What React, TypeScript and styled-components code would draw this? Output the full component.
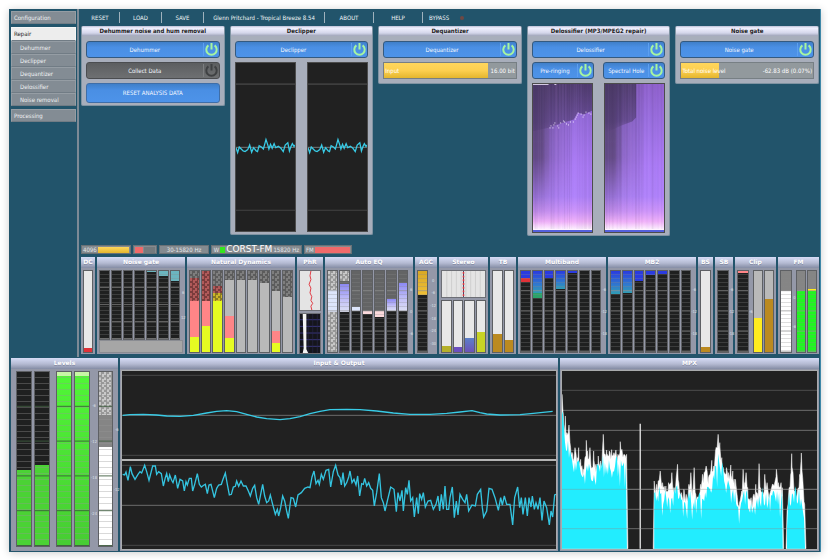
import React from 'react';
import styled, { createGlobalStyle, css } from 'styled-components';

const GlobalStyle = createGlobalStyle`
  *, *::before, *::after { box-sizing: border-box; }
  body { margin: 0; background: #fff; }
  body, button {
    font-family: "DejaVu Sans Condensed", "Noto Sans", sans-serif;
    font-size: 6px;
    line-height: 10px;
  }
  button { margin: 0; padding: 0; border: 0; cursor: pointer; }
  svg { display: block; }
`;

/* ---------- shell ---------- */

const Page = styled.div`
  display: flex;
  min-height: 100vh;
  padding: 9px 7px 8px 9px;
`;

const Window = styled.div`
  flex: 1;
  min-width: 0;
  display: grid;
  grid-template-columns: minmax(0, 1fr);
  grid-template-rows: 1fr auto;
  background: #22546b;
  border-right: 1px solid #3f88a8;
  box-shadow: 0 1px 8px rgba(0, 0, 0, 0.2);
`;

const Upper = styled.div`
  display: flex;
  padding-bottom: 1px;
`;

const Sidebar = styled.nav`
  display: flex;
  flex-direction: column;
  flex: 0 0 70px;
  padding: 2px 1px 0 2px;
  border-right: 2px solid #7d8a96;
`;

const NavGroup = styled.div`
  display: flex;
  flex-direction: column;
  margin-bottom: 3px;
`;

const NavItem = styled.button<{ $active?: boolean; $sub?: boolean }>`
  height: ${(p) => (p.$active ? 14 : 13)}px;
  padding-left: ${(p) => (p.$sub ? 8 : 2)}px;
  text-align: left;
  color: ${(p) => (p.$active ? '#222' : '#eef0f2')};
  background: ${(p) => (p.$active ? '#ededed' : '#838c94')};
  border: 1px solid ${(p) => (p.$active ? '#f6f6f6' : '#959da4')};
  border-bottom-color: #717c85;
`;

const Main = styled.main`
  flex: 1;
  min-width: 0;
  display: flex;
  flex-direction: column;
  padding: 0 1px 3px 2px;
`;

const Menu = styled.div`
  display: flex;
  align-items: center;
  height: 17px;
`;

const MenuItem = styled.button<{ $w: number }>`
  flex: 0 0 ${(p) => p.$w}px;
  height: 11px;
  color: #f0f4f6;
  background: none;
  border-right: 1px solid #9fb2bd;
  white-space: nowrap;
`;

const Bypass = styled.button`
  display: flex;
  align-items: center;
  gap: 11px;
  padding-left: 6px;
  color: #f0f4f6;
  background: none;
`;

const Lamp = styled.span`
  width: 4px;
  height: 4px;
  border-radius: 50%;
  background: #704844;
`;

/* ---------- repair panels ---------- */

const Panels = styled.div`
  display: grid;
  grid-template-columns: repeat(5, minmax(0, 1fr));
  align-items: start;
  gap: 5px;
`;

const Panel = styled.section`
  background: #a8aebb;
  border: solid #7f93a2;
  border-width: 0 1px 1px;
  border-radius: 2px;
  overflow: hidden;
`;

const PanelTitle = styled.h2`
  margin: 0;
  height: 10px;
  font-size: 6px;
  line-height: 9px;
  text-align: center;
  white-space: nowrap;
  color: #1d1d22;
  background: linear-gradient(#b9bdd4, #f1f1ff 20%, #d4d6ea 70%, #9fa4b8);
`;

const PanelBody = styled.div<{ $end?: number }>`
  display: grid;
  gap: 4px;
  padding: 5px 4px ${(p) => p.$end ?? 2}px;
`;

const Pair = styled.div<{ $gap: number }>`
  display: grid;
  grid-template-columns: 1fr 1fr;
  gap: ${(p) => p.$gap}px;
`;

const blue = css`
  background: linear-gradient(#3f7fc9, #4a8fe4 35%, #4d93e9);
`;

const Action = styled.button`
  ${blue}
  height: 20px;
  color: #f2f7ff;
  border: 1px solid #3f6ea8;
  border-radius: 3px;
`;

const ToggleButton = styled.button<{ $off?: boolean }>`
  display: flex;
  align-items: center;
  height: 17px;
  padding-right: 1px;
  color: #f2f7ff;
  border: 1px solid ${(p) => (p.$off ? '#4b4d50' : '#345a80')};
  border-radius: 3px;
  ${(p) => (p.$off ? css`background: linear-gradient(#5c5e60, #6e7072);` : blue)}
`;

const ToggleLabel = styled.span`
  flex: 1;
  text-align: center;
  white-space: nowrap;
`;

const PowerSlot = styled.span<{ $off?: boolean }>`
  display: flex;
  padding-left: 1px;
  border-left: 1px solid ${(p) => (p.$off ? '#7c7e80' : '#5c9ff0')};
  color: ${(p) => (p.$off ? '#3f4143' : '#a6f5a0')};
`;

const Power = () => (
  <svg width="13" height="13" viewBox="0 0 13 13" fill="none" stroke="currentColor" strokeWidth="2" aria-hidden="true">
    <path d="M3.4 2.4A5.2 5.2 0 1 0 9.6 2.4" />
    <path d="M6.5 0V6.5" />
  </svg>
);

const Toggle = ({ label, off }: { label: string; off?: boolean }) => (
  <ToggleButton $off={off} aria-pressed={!off}>
    <ToggleLabel>{label}</ToggleLabel>
    <PowerSlot $off={off}><Power /></PowerSlot>
  </ToggleButton>
);

const Gauge = styled.div<{ $value: number }>`
  display: flex;
  justify-content: space-between;
  height: 17px;
  padding: 0 1px;
  line-height: 15px;
  color: #fff;
  border: 1px solid #777f84;
  white-space: nowrap;
  background: linear-gradient(#ffd65c, #fccf50 50%, #e4b62e) 0 0 / ${(p) => p.$value}% 100% no-repeat #92999d;
`;

const Screen = styled.svg<{ $h: number }>`
  width: 100%;
  height: ${(p) => p.$h}px;
  background: #212121;
  border: 1px solid #4c4c4c;
`;

const WAVE =
  '30,80 35,95 40,78 46,84 52,90 58,92 66,86 72,72 78,94 84,80 92,90 96,92 101,74 108,78 114,84 118,70 122,55 127,70 131,84 136,70 141,82 147,68 152,80 160,76 168,82 175,92 181,72 189,65 194,90 199,76 203,68 208,76 212,72';

const ClipScope = () => (
  <Screen $h={170} viewBox="30 -177 182 510" preserveAspectRatio="none">
    <path d="M30-113H212" stroke="#555" strokeWidth="3" />
    <path d="M30 79H212" stroke="#777" strokeWidth="3" />
    <path d="M30 270H212" stroke="#444" strokeWidth="3" />
    <polyline points={WAVE} fill="none" stroke="#38cbe6" strokeWidth="4" />
  </Screen>
);

/* Small repeatable generator so that the drawn noise is the same on each load. */
const seeded = (seed: number) => {
  let s = seed;
  return () => {
    s = (s * 16807) % 2147483647;
    return s / 2147483647;
  };
};

const TRACE: [number, number][] = [
  [17, 44], [18, 42], [20, 44], [21, 41], [22, 39], [25, 42], [26, 44], [28, 39], [31, 37], [32, 38], [34, 40],
  [36, 41], [38, 38], [41, 38], [43, 35], [44, 33], [45, 31], [46, 29], [49, 30], [51, 33], [52, 31], [54, 28], [57, 29], [59, 30],
];

const Spectrogram = ({ id, trace, seed }: { id: string; trace?: boolean; seed: number }) => {
  const rnd = seeded(seed);
  const streaks = Array.from({ length: 61 }, (_, i) => ({ x: i, o: rnd() * 0.1, light: rnd() > 0.5 }));
  return (
    <Screen $h={150} viewBox="0 0 61 150" preserveAspectRatio="none">
      <defs>
        <linearGradient id={`${id}v`} x2="0" y2="1">
          <stop offset="0" stopColor="#8f62cc" />
          <stop offset=".25" stopColor="#9a6fe0" />
          <stop offset=".55" stopColor="#ac7cf6" />
          <stop offset=".76" stopColor="#b184fb" />
          <stop offset=".86" stopColor="#cf96fa" />
          <stop offset=".93" stopColor="#f2b4fa" />
          <stop offset=".98" stopColor="#fff2ff" />
        </linearGradient>
        <linearGradient id={`${id}h`} x2="1" y2="0">
          <stop offset="0" stopColor="#453856" stopOpacity=".75" />
          <stop offset=".17" stopColor="#453856" stopOpacity=".75" />
          <stop offset=".2" stopColor="#453856" stopOpacity=".55" />
          <stop offset=".27" stopColor="#453856" stopOpacity=".5" />
          <stop offset=".29" stopColor="#453856" stopOpacity=".3" />
          <stop offset=".65" stopColor="#453856" stopOpacity=".08" />
          <stop offset=".66" stopColor="#453856" stopOpacity="0" />
        </linearGradient>
        <linearGradient id={`${id}f`} x2="0" y2="1">
          <stop offset="0" stopColor="#fff" />
          <stop offset=".5" stopColor="#e4e4e4" />
          <stop offset=".78" stopColor="#444" />
          <stop offset=".95" stopColor="#000" />
        </linearGradient>
        <linearGradient id={`${id}t`} x2="0" y2="1">
          <stop offset="0" stopColor="#4b3a66" stopOpacity=".9" />
          <stop offset={trace ? '.8' : '.75'} stopColor="#4f3c70" stopOpacity=".62" />
          <stop offset="1" stopColor="#4f3c70" stopOpacity={trace ? '.35' : '0'} />
        </linearGradient>
        <mask id={`${id}m`}><rect width="61" height="150" fill={`url(#${id}f)`} /></mask>
      </defs>
      <rect width="61" height="150" fill={`url(#${id}v)`} />
      <rect width="61" height="150" fill={`url(#${id}h)`} mask={`url(#${id}m)`} />
      {trace
        ? <path d="M0 0H61V27L52 31L46 29L42 36L28 40L17 44L0 48Z" fill={`url(#${id}t)`} />
        : <path d="M0 0H32V34L28 38L17 42L0 50Z" fill={`url(#${id}t)`} />}
      {streaks.map((k) => (
        <rect key={k.x} x={k.x} width="1" height="147" fill={k.light ? '#c79cff' : '#3c2c5a'} opacity={k.o} />
      ))}
      {trace && TRACE.map(([x, y]) => <rect key={x} x={x} y={y} width="1" height="1" fill="#f2e8ff" />)}
      {trace && <path d="M0 .5H16M22 .5H24" stroke="#d9cfe6" />}
      <path d="M0 149H61" stroke="#1d2fd0" strokeWidth="1.6" />
    </Screen>
  );
};

/* ---------- status strip ---------- */

const Status = styled.div`
  display: flex;
  gap: 2px;
  margin-top: auto;
  margin-bottom: 3px;
`;

const Chip = styled.div<{ $w: number }>`
  display: flex;
  align-items: center;
  justify-content: center;
  gap: 1px;
  flex: 0 0 ${(p) => p.$w}px;
  height: 9px;
  padding: 0 1px;
  line-height: 7px;
  color: #e3e7ea;
  background: #858b90;
  border: 1px solid #6a7176;
  white-space: nowrap;
`;

const ChipFill = styled.span<{ $c: string; $w?: number }>`
  flex: ${(p) => (p.$w ? `0 0 ${p.$w}px` : 1)};
  height: 6px;
  background: ${(p) => p.$c};
`;

const Rds = styled.span`
  font-family: "DejaVu Sans", sans-serif;
  font-size: 9px;
  color: #fff;
`;

/* ---------- meters ---------- */

const Rack = styled.div`
  display: grid;
  grid-template-columns: 14fr 88fr 108fr 26fr 88fr 22fr 49fr 26fr 88fr 88fr 15fr 18fr 41fr 41fr;
  gap: 2px;
`;

const Unit = styled.section`
  min-width: 0;
  display: flex;
  flex-direction: column;
  background: #9498a8;
`;

const UnitTitle = styled.h3`
  margin: 0;
  height: 11px;
  font-family: "DejaVu Sans", sans-serif;
  font-size: 6px;
  line-height: 10px;
  text-align: center;
  white-space: nowrap;
  overflow: hidden;
  color: #fff;
  text-shadow: 0 1px 0 #878da6;
  background: linear-gradient(#d6dcf6, #b4bad2 55%, #848ca4);
`;

const Bars = styled.div<{ $h?: number; $gap?: number; $end?: number }>`
  display: flex;
  gap: ${(p) => p.$gap ?? 1}px;
  height: ${(p) => p.$h ?? 83}px;
  margin: 2px ${(p) => p.$end ?? 2}px 0 2px;
`;

type Look = 'fine' | 'coarse' | 'plain';

const lines: Record<Look, ReturnType<typeof css>> = {
  fine: css`
    background:
      linear-gradient(transparent 95%, rgba(150, 150, 150, 0.55) 0) 0 0 / 100% 25%,
      linear-gradient(transparent 3px, rgba(135, 135, 135, 0.28) 0) 0 0 / 100% 4px;
  `,
  coarse: css`
    background:
      linear-gradient(transparent 97%, rgba(60, 90, 60, 0.9) 0) 0 0 / 100% 20%,
      linear-gradient(transparent 5px, rgba(150, 150, 150, 0.36) 0) 0 0 / 100% 6px;
  `,
  plain: css`background: none;`,
};

const Track = styled.div<{ $look: Look; $flex: number }>`
  position: relative;
  flex: ${(p) => p.$flex} 1 0;
  min-width: 0;
  display: flex;
  flex-direction: column;
  border: 1px solid #5e6064;
  background: #1f2020;
  &::after {
    content: "";
    position: absolute;
    inset: 0;
    ${(p) => lines[p.$look]}
  }
`;

const Fill = styled.div<{ $h: number; $paint: string }>`
  flex: ${(p) => p.$h} 1 0;
  background: ${(p) => p.$paint};
`;

const Gap = styled.div<{ $flex: number }>`
  flex: ${(p) => p.$flex} 1 0;
`;

const Scale = styled.div<{ $flex?: number }>`
  flex: ${(p) => p.$flex ?? 4} 1 0;
  min-width: 0;
  display: flex;
  flex-direction: column;
  justify-content: space-evenly;
  align-items: center;
  font-size: 4px;
  line-height: 5px;
  color: #dfe2ea;
`;

const checks = (a: string, b: string) => `repeating-conic-gradient(${a} 0 25%, ${b} 0 50%) 0 0 / 5px 5px`;

const PAINT: Record<string, string> = {
  check: checks('#5c5c5c', '#7e7e7e'),
  redCheck: checks('#7a3c3c', '#b25a5a'),
  goldCheck: checks('#8a7a20', '#cdb52a'),
  paleCheck: checks('#989898', '#c8c8c8'),
  pink: '#ff8587',
  yellow: '#e6fb22',
  silver: '#b9b9b9',
  steel: '#636465',
  mid: '#858585',
  light: '#e8e8e8',
  white: '#fff',
  dark: '#1f2020',
  red: '#e03238',
  blue: '#2a3be0',
  sky: 'linear-gradient(#2a3be0, #2f78cf 60%, #2f9db4)',
  leaf: '#2aa36a',
  teal: '#6bb5bf',
  lilac: 'linear-gradient(#8c88f4, #c5c3f7 60%, #dcdff4)',
  ice: '#dde5fb',
  blush: '#fbd9dc',
  gold: 'linear-gradient(#d9a824, #efbf36)',
  brown: '#bb8a20',
  olive: '#b5b02a',
  violet: '#6b4fc0',
  denim: 'linear-gradient(#5c80c8, #6c52b8)',
  lime: '#c8d325',
  sun: '#ffec1f',
  green: '#22f522',
  grass: 'linear-gradient(#50f636, #47cc33)',
  moss: '#4bd235',
  mint: '#c8f5a6',
};

/* A meter is read from top to bottom: each pair is a paint and its share of the height. */
type Stack = [string, number][];

const Meter = ({ stack, look = 'fine', flex = 10 }: { stack: Stack; look?: Look; flex?: number }) => (
  <Track $look={look} $flex={flex}>
    {stack.map(([paint, h], i) => <Fill key={i} $paint={PAINT[paint]} $h={h} />)}
  </Track>
);

const Meters = ({ stacks, look }: { stacks: Stack[]; look?: Look }) => (
  <>{stacks.map((s, i) => <Meter key={i} stack={s} look={look} />)}</>
);

const Marks = ({ values, flex }: { values: string[]; flex?: number }) => (
  <Scale $flex={flex}>{values.map((v) => <span key={v}>{v}</span>)}</Scale>
);

const DB = ['-6', '-12', '-18'];

const NOISE: Stack[] = [
  [['dark', 1]], [['dark', 1]], [['dark', 1]], [['dark', 1]],
  [['teal', 3], ['dark', 202]], [['teal', 13], ['dark', 192]], [['teal', 30], ['dark', 175]],
];

const DYNAMICS: Stack[] = [
  [['check', 20], ['redCheck', 68], ['pink', 108], ['yellow', 47]],
  [['redCheck', 88], ['pink', 75], ['yellow', 80]],
  [['check', 45], ['redCheck', 21], ['goldCheck', 22], ['yellow', 155]],
  [['check', 25], ['silver', 108], ['pink', 68], ['yellow', 42]],
  [['check', 25], ['silver', 218]],
  [['check', 25], ['silver', 218]],
  [['check', 36], ['silver', 207]],
  [['check', 58], ['silver', 120], ['pink', 37], ['yellow', 28]],
  [['check', 78], ['silver', 165]],
];

const EQ: Stack[] = [
  [['paleCheck', 55], ['ice', 67], ['paleCheck', 121]],
  [['paleCheck', 28], ['steel', 11], ['lilac', 82], ['dark', 122]],
  [['steel', 108], ['ice', 12], ['dark', 123]],
  [['steel', 120], ['blush', 7], ['dark', 116]],
  [['steel', 120], ['blush', 18], ['dark', 105]],
  [['steel', 84], ['lilac', 36], ['dark', 123]],
  [['steel', 36], ['lilac', 84], ['dark', 123]],
];

const MULTI: Stack[] = [
  [['blue', 20], ['red', 13], ['dark', 210]],
  [['sky', 64], ['leaf', 15], ['dark', 164]],
  [['blue', 20], ['dark', 223]],
  [['sky', 54], ['dark', 189]],
  [['blue', 4], ['dark', 239]],
  [['dark', 1]],
  [['dark', 1]],
];

const MULTI2: Stack[] = [
  [['sky', 68], ['dark', 175]],
  [['sky', 66], ['dark', 177]],
  [['blue', 28], ['dark', 215]],
  [['blue', 12], ['dark', 231]],
  [['blue', 9], ['dark', 234]],
  [['dark', 1]],
  [['dark', 1]],
];

const STEREO: Stack[] = [
  [['light', 136], ['olive', 19]],
  [['light', 138], ['violet', 17]],
  [['light', 111], ['denim', 44]],
  [['light', 93], ['lime', 62]],
];

const Blank = styled.div`
  flex: 1;
  margin: 0 2px 1px;
  background: #a6a6a6;
  border: 1px solid #8a8c92;
`;

const PhaseScope = styled.svg<{ $h: number; $dark?: boolean }>`
  width: calc(100% - 4px);
  height: ${(p) => p.$h}px;
  margin: 2px 2px 0;
  background: ${(p) => (p.$dark ? '#15151c' : '#e4e4e4')};
  border: 1px solid #6d6f76;
`;

/* ---------- lower row ---------- */

const Lower = styled.div`
  display: grid;
  grid-template-columns: 107fr 438fr 259fr;
  gap: 2px;
  padding: 0 1px 1px 2px;
`;

const Plot = styled.svg`
  flex: 1;
  width: calc(100% - 2px);
  height: 180px;
  margin: 1px 1px 1px;
  background: #212121;
  border: 1px solid #a9abad;
`;

const INPUT =
  '368,193 390,191 430,190 470,192 500,195 540,196 580,193 620,186 650,181 680,179 710,182 740,190 770,198 800,203 840,206 870,203 900,197 930,188 960,181 990,176 1040,175 1080,176 1130,180 1180,186 1230,190 1290,190 1340,187 1380,183 1416,179 1440,185 1460,189 1500,192 1560,191 1600,187 1658,181';

const OUTPUT =
  '368,370 374,372 378,363 384,388 391,347 396,368 405,385 414,370 420,362 425,366 434,343 440,362 447,388 458,345 466,345 470,370 476,362 484,368 490,405 496,380 500,368 505,392 509,372 515,388 519,395 526,372 533,412 540,385 548,390 553,420 558,392 562,402 568,382 574,382 578,420 584,400 592,368 598,400 604,408 612,402 616,400 622,428 627,402 633,400 643,440 650,412 656,402 664,400 668,388 676,366 682,400 688,432 694,430 700,408 706,406 710,390 716,406 723,390 730,405 738,405 745,420 751,435 758,412 764,403 770,440 776,460 782,430 788,400 794,435 800,455 806,450 811,432 818,460 826,490 832,475 836,495 ' +
  '842,470 848,435 854,450 860,480 865,502 873,440 880,442 887,468 894,432 904,425 914,412 924,408 930,410 936,378 942,360 948,398 954,388 958,400 964,370 970,385 978,358 986,355 992,408 1000,362 1007,343 1014,372 1020,380 1024,402 1029,365 1034,405 1040,395 1046,378 1050,360 1056,395 1062,385 1068,402 1073,375 1079,435 1085,398 1090,400 1094,382 1100,405 1106,395 1112,412 1118,418 1123,465 1130,425 1138,368 1144,440 1150,455 1155,480 1162,450 1172,408 1182,415 1189,482 1194,425 1200,450 1206,418 1210,480 1217,410 1222,430 1227,388 1232,450 1238,440 1243,498 1250,440 1255,488 1259,428 1265,445 1270,425 1276,468 1284,450 1292,448 1300,475 1308,460 1314,435 1319,480 1324,430 1330,475 1335,405 1340,475 1346,475 1350,440 1357,408 1363,500 1369,450 1374,492 1380,430 1388,445 1395,455 1400,430 1406,480 1416,462 1426,465 1432,430 1442,415 1447,470 1451,498 1460,480 1467,412 1476,415 1485,440 1495,478 1502,440 1507,462 1513,435 1520,460 1530,460 1538,522 1544,440 1553,408 1559,470 1564,440 1569,490 1576,440 1582,495 1587,440 1593,468 1597,435 1603,475 1608,455 1614,475 1620,440 1626,508 1632,450 1640,470 1648,522 1653,480 1658,498 1664,432 1668,430';

const IoPlot = () => (
  <Plot viewBox="366 60 1302 533" preserveAspectRatio="none">
    <path d="M366 73H1668M366 313H1668M366 343H1668M366 583H1668" stroke="#484848" strokeWidth="3" />
    <path d="M366 193H1668M366 463H1668" stroke="#6c6c6c" strokeWidth="3" />
    <path d="M366 327H1668" stroke="#b4b4b4" strokeWidth="6" />
    <polyline points={INPUT} fill="none" stroke="#38cbe6" strokeWidth="4" />
    <polyline points={OUTPUT} fill="none" stroke="#34c4e0" strokeWidth="4" />
  </Plot>
);

const BANDS: [number, number][][] = [
  [[36,130],[40,190],[43,240],[46,195],[50,245],[57,222],[62,290],[68,310],[75,290],[82,320],[86,290],[92,325],[100,355],[105,320],[109,268],[113,300],[120,290],[124,350],[131,300],[136,340],[145,315],[152,330],[157,310],[160,250],[163,310],[170,297],[178,300],[185,296],[192,305],[198,297],[204,310],[211,272],[216,295],[222,310],[230,310]],
  [[313,390],[320,400],[331,360],[338,395],[348,405],[356,395],[366,365],[372,410],[379,380],[383,340],[387,395],[395,425],[402,415],[409,430],[417,400],[423,365],[428,420],[433,350],[438,430],[445,440],[452,400],[458,370],[469,345],[476,380],[486,328],[492,345],[497,300],[505,250],[510,275],[516,320],[524,365],[530,350],[536,365],[543,342],[549,360],[557,385],[563,440],[569,455],[576,420],[580,355],[585,395],[589,365],[594,410],[604,440],[612,430],[618,400],[624,430],[628,338],[632,410],[639,425],[645,370],[652,395],[660,430],[668,400],[680,355],[686,395],[694,395],[698,410]],
  [[712,480],[718,410],[723,370],[726,308],[730,365],[737,420],[743,420],[750,370],[755,306],[759,380],[765,460]],
];

const at = (pts: [number, number][], x: number) => {
  for (let i = 1; i < pts.length; i++) {
    const [x0, y0] = pts[i - 1];
    const [x1, y1] = pts[i];
    if (x <= x1) return y0 + ((y1 - y0) * (x - x0)) / (x1 - x0);
  }
  return pts[pts.length - 1][1];
};

/* Peak hold in white with the live spectrum over it; the valleys of both are jagged. */
const spectrum = () => {
  const rnd = seeded(77);
  let peak = '';
  let body = '';
  for (const pts of BANDS) {
    const a = pts[0][0];
    const b = pts[pts.length - 1][0];
    peak += `M${a - 3} 593`;
    body += `M${a} 593`;
    for (let x = a; x <= b; x += 1) {
      const anchor = pts.some((p) => p[0] === x);
      if (anchor || (x - a) % 3 === 0) {
        peak += `L${x} ${Math.round(at(pts, x) + (anchor ? 0 : rnd() * 34))}`;
      }
      if ((x - a) % 3 === 0) {
        const near = (at(pts, Math.max(a, x - 9)) + at(pts, x) + at(pts, Math.min(b, x + 9))) / 3;
        const deep = rnd() > 0.86 ? 34 : 0;
        body += `L${x} ${Math.round(near + 14 + rnd() * 66 + deep)}`;
      }
    }
    peak += `L${b + 4} 593Z`;
    body += `L${b + 1} 593Z`;
  }
  return { peak, body };
};

const { peak, body } = spectrum();

const MpxPlot = () => (
  <Plot viewBox="36 60 766 533" preserveAspectRatio="none">
    <path d="M36 118H802M36 298H802M36 355H802M36 475H802M36 533H802" stroke="#4c4c4c" strokeWidth="3" />
    <path d="M36 178H802M36 238H802M36 415H802" stroke="#6e6e6e" strokeWidth="3" />
    <path d={peak} fill="#fff" stroke="#fff" strokeWidth="1.5" />
    <path d="M271 218V593" stroke="#e6e6e6" strokeWidth="4" />
    <path d={body} fill="#22edff" />
    <path d="M36 415H802M36 475H802M36 533H802" stroke="#8b8b8b" strokeOpacity=".4" strokeWidth="3" />
  </Plot>
);

/* ---------- app ---------- */

const MENU: [string, number][] = [
  ['RESET', 39], ['LOAD', 42], ['SAVE', 42], ['Glenn Pritchard - Tropical Breeze 8.54', 121], ['ABOUT', 49], ['HELP', 49],
];

export default function App() {
  return (
    <Page>
      <GlobalStyle />
      <Window>
        <Upper>
          <Sidebar>
            <NavGroup><NavItem>Configuration</NavItem></NavGroup>
            <NavGroup>
              <NavItem $active>Repair</NavItem>
              {['Dehummer', 'Declipper', 'Dequantizer', 'Delossifier', 'Noise removal'].map((n) => (
                <NavItem key={n} $sub>{n}</NavItem>
              ))}
            </NavGroup>
            <NavGroup><NavItem>Processing</NavItem></NavGroup>
          </Sidebar>
          <Main>
            <Menu>
              {MENU.map(([n, w]) => <MenuItem key={n} $w={w}>{n}</MenuItem>)}
              <Bypass>BYPASS<Lamp /></Bypass>
            </Menu>
            <Panels>
              <Panel>
                <PanelTitle>Dehummer noise and hum removal</PanelTitle>
                <PanelBody>
                  <Toggle label="Dehummer" />
                  <Toggle label="Collect Data" off />
                  <Action>RESET ANALYSIS DATA</Action>
                </PanelBody>
              </Panel>
              <Panel>
                <PanelTitle>Declipper</PanelTitle>
                <PanelBody>
                  <Toggle label="Declipper" />
                  <Pair $gap={11}><ClipScope /><ClipScope /></Pair>
                </PanelBody>
              </Panel>
              <Panel>
                <PanelTitle>Dequantizer</PanelTitle>
                <PanelBody $end={4}>
                  <Toggle label="Dequantizer" />
                  <Gauge $value={79}><span>Input</span><span>16.00 bit</span></Gauge>
                </PanelBody>
              </Panel>
              <Panel>
                <PanelTitle>Delossifier (MP3/MPEG2 repair)</PanelTitle>
                <PanelBody>
                  <Toggle label="Delossifier" />
                  <Pair $gap={9}><Toggle label="Pre-ringing" /><Toggle label="Spectral Hole" /></Pair>
                  <Pair $gap={11}>
                    <Spectrogram id="pre" trace seed={11} />
                    <Spectrogram id="hole" seed={29} />
                  </Pair>
                </PanelBody>
              </Panel>
              <Panel>
                <PanelTitle>Noise gate</PanelTitle>
                <PanelBody $end={4}>
                  <Toggle label="Noise gate" />
                  <Gauge $value={29}><span>Total noise level</span><span>-62.83 dB (0.07%)</span></Gauge>
                </PanelBody>
              </Panel>
            </Panels>
            <Status>
              <Chip $w={50}>4096<ChipFill $c="linear-gradient(#ffd65c, #e4b62e)" /></Chip>
              <Chip $w={24}><ChipFill $c="#f06a6a" $w={8} /><ChipFill $c="#747a7e" /></Chip>
              <Chip $w={50}>30-15820 Hz</Chip>
              <Chip $w={91}>W<ChipFill $c="#35e51f" $w={5} /><Rds>CORST-FM</Rds>15820 Hz</Chip>
              <Chip $w={48}>FM<ChipFill $c="#f06a6a" /></Chip>
            </Status>
            <Rack>
              <Unit>
                <UnitTitle>DC</UnitTitle>
                <Bars><Meter look="plain" stack={[['light', 230], ['red', 13]]} /></Bars>
              </Unit>
              <Unit>
                <UnitTitle>Noise gate</UnitTitle>
                <Bars $h={70} $end={0}><Meters stacks={NOISE} /><Marks values={['6', '12']} /></Bars>
                <Blank />
              </Unit>
              <Unit>
                <UnitTitle>Natural Dynamics</UnitTitle>
                <Bars><Meters stacks={DYNAMICS} look="plain" /></Bars>
              </Unit>
              <Unit>
                <UnitTitle>PhR</UnitTitle>
                <PhaseScope $h={41} viewBox="0 0 22 41" preserveAspectRatio="none">
                  <path d="M12 0l-1 5 1 4-2 5 2 4-1 5 2 4-1 4 2 3-2 3 1 4" fill="none" stroke="#e0323a" />
                </PhaseScope>
                <PhaseScope $dark $h={41} viewBox="0 0 22 41" preserveAspectRatio="none">
                  <path d="M0 6H22M0 13H22M0 20H22M0 27H22M0 34H22" stroke="#44409a" strokeWidth=".8" />
                  <path d="M9 0V41M14 0V41M19 0V41" stroke="#2c2a50" strokeWidth=".6" />
                  <path d="M3 0H7V37L9 41H3L4 36Z" fill="#f4f4f4" />
                </PhaseScope>
              </Unit>
              <Unit>
                <UnitTitle>Auto EQ</UnitTitle>
                <Bars $end={0}><Meters stacks={EQ} /><Marks values={['6', '0', '-6']} /></Bars>
              </Unit>
              <Unit>
                <UnitTitle>AGC</UnitTitle>
                <Bars $end={0}>
                  <Meter stack={[['gold', 70], ['dark', 173]]} />
                  <Marks values={['0', '-6', '-12', '-18', '-24', '-30']} flex={8} />
                </Bars>
              </Unit>
              <Unit>
                <UnitTitle>Stereo</UnitTitle>
                <PhaseScope $h={28} viewBox="0 0 45 28" preserveAspectRatio="none">
                  <path d="M5 0V28M10 0V28M15 0V28M20 0V28M25 0V28M30 0V28M35 0V28M40 0V28" stroke="#c4c4c4" strokeWidth=".7" />
                  <path d="M22.5 0V28" stroke="#3a3c60" />
                  <path d="M22.5 1V28" stroke="#e0323a" strokeWidth="1.6" strokeDasharray="2 2" />
                </PhaseScope>
                <Bars $h={53}><Meters stacks={STEREO} look="plain" /></Bars>
              </Unit>
              <Unit>
                <UnitTitle>TB</UnitTitle>
                <Bars><Meters look="plain" stacks={[[['light', 187], ['brown', 56]], [['light', 207], ['brown', 36]]]} /></Bars>
              </Unit>
              <Unit>
                <UnitTitle>Multiband</UnitTitle>
                <Bars $end={0}><Meters stacks={MULTI} /><Marks values={DB} /></Bars>
              </Unit>
              <Unit>
                <UnitTitle>MB2</UnitTitle>
                <Bars $end={0}><Meters stacks={MULTI2} /><Marks values={DB} /></Bars>
              </Unit>
              <Unit>
                <UnitTitle>BS</UnitTitle>
                <Bars><Meter look="plain" stack={[['light', 228], ['brown', 15]]} /></Bars>
              </Unit>
              <Unit>
                <UnitTitle>SB</UnitTitle>
                <Bars $end={0}><Meter stack={[['dark', 1]]} flex={12} /><Marks values={DB} /></Bars>
              </Unit>
              <Unit>
                <UnitTitle>Clip</UnitTitle>
                <Bars>
                  <Meter stack={[['pink', 6], ['dark', 237]]} flex={12} />
                  <Marks values={['-6']} flex={3} />
                  <Meter look="plain" stack={[['silver', 141], ['sun', 102]]} />
                  <Meter look="plain" stack={[['silver', 82], ['brown', 161]]} />
                </Bars>
              </Unit>
              <Unit>
                <UnitTitle>FM</UnitTitle>
                <Bars>
                  <Meter stack={[['mid', 60], ['white', 183]]} flex={13} />
                  <Marks values={['0', '-6']} flex={3} />
                  <Meter stack={[['mid', 60], ['green', 183]]} />
                  <Meter stack={[['mid', 53], ['sun', 7], ['green', 183]]} />
                </Bars>
              </Unit>
            </Rack>
          </Main>
        </Upper>
        <Lower>
          <Unit>
            <UnitTitle>Levels</UnitTitle>
            <Bars $h={176} $gap={2} $end={0}>
              <Gap $flex={1} />
              <Meter look="coarse" flex={16} stack={[['dark', 294], ['moss', 230]]} />
              <Meter look="coarse" flex={16} stack={[['dark', 279], ['moss', 245]]} />
              <Gap $flex={2} />
              <Meter look="coarse" flex={16} stack={[['mint', 12], ['grass', 512]]} />
              <Meter look="coarse" flex={16} stack={[['mint', 12], ['grass', 512]]} />
              <Marks values={['-6', '-12', '-18', '-24']} flex={5} />
              <Meter look="coarse" flex={15} stack={[['paleCheck', 127], ['mid', 97], ['white', 300]]} />
              <Marks values={['-6', '-12']} flex={3} />
            </Bars>
          </Unit>
          <Unit>
            <UnitTitle>Input &amp; Output</UnitTitle>
            <IoPlot />
          </Unit>
          <Unit>
            <UnitTitle>MPX</UnitTitle>
            <MpxPlot />
          </Unit>
        </Lower>
      </Window>
    </Page>
  );
}
